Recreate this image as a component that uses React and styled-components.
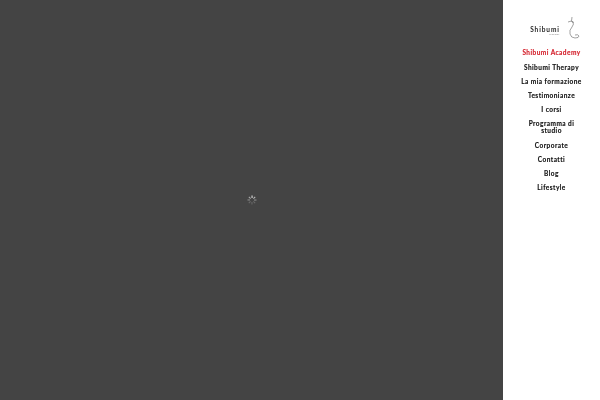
import React from "react";
import styled, { createGlobalStyle } from "styled-components";

const Global = createGlobalStyle`
  html, body { margin: 0; padding: 0; height: 100%; overflow: hidden; background: #444; }
`;
const Page = styled.div`
  display: flex;
  width: 600px;
  height: 400px;
`;
const Stage = styled.main`
  flex: 1;
  background: #444444;
  display: flex;
  align-items: center;
  justify-content: center;
`;
const Sidebar = styled.aside`
  width: 97px;
  background: #fff;
  display: flex;
  flex-direction: column;
  align-items: center;
  padding-top: 16px;
  box-sizing: border-box;
  will-change: transform;
`;
const Logo = styled.div`
  width: 50px;
  height: 24px;
  margin-left: 7px;
  display: flex;
  align-items: center;
  justify-content: center;
  gap: 6px;
`;
const Wordmark = styled.div`
  display: flex;
  flex-direction: column;
  align-items: flex-end;
  margin-top: 5px;
`;
const BrandName = styled.span`
  font: 700 6.5px/7px "Lato", sans-serif;
  letter-spacing: 0.9px;
  color: #222;
`;
const BrandTag = styled.span`
  font: 400 2px/3px "Lato", sans-serif;
  letter-spacing: 0.4px;
  color: #777;
`;
const Nav = styled.nav`
  display: flex;
  flex-direction: column;
  align-items: center;
  margin-top: 5.8px;
  width: 100%;
`;
const Item = styled.a`
  width: 65px;
  padding: 3.6px 0;
  text-align: center;
  font: 700 6.5px/7px "Lato", sans-serif;
  letter-spacing: 0.45px;
  -webkit-text-stroke: 0.12px currentColor;
  color: ${(p) => (p.$active ? "#d4202c" : "#111")};
`;

const items = [
  "Shibumi Academy",
  "Shibumi Therapy",
  "La mia formazione",
  "Testimonianze",
  "I corsi",
  "Programma di studio",
  "Corporate",
  "Contatti",
  "Blog",
  "Lifestyle",
];

const spokes = [
  [0, "#ddd"], [45, "#bbb"], [90, "#888"], [135, "#6a6a6a"],
  [180, "#666"], [225, "#6a6a6a"], [270, "#8a8a8a"], [315, "#aaa"],
];

export default function App() {
  return (
    <Page>
      <Global />
      <Stage>
        <svg width="10" height="10" viewBox="0 0 20 20">
          {spokes.map(([a, c]) => (
            <rect key={a} x="9" y="1" width="2.2" height="5" fill={c} transform={`rotate(${a} 10 10)`} />
          ))}
        </svg>
      </Stage>
      <Sidebar>
        <Logo>
          <Wordmark>
            <BrandName>Shibumi</BrandName>
            <BrandTag>academy</BrandTag>
          </Wordmark>
          <svg width="14" height="24" viewBox="0 0 14 24" fill="none" stroke="#444" strokeWidth="0.5">
            <path d="M6 1 L5.5 5 M2 6 Q5 4 8 6.5 M6 5 Q9 8 6 11 Q3 14 4 18 Q5 22 9 22 Q13 22 13 20 Q12 18 9 19" />
          </svg>
        </Logo>
        <Nav>
          {items.map((t, i) => (
            <Item key={t} $active={i === 0}>{t}</Item>
          ))}
        </Nav>
      </Sidebar>
    </Page>
  );
}
